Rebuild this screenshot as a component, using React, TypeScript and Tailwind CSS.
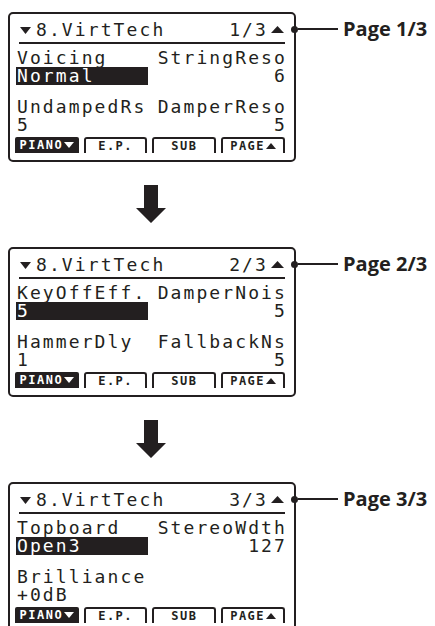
import React from "react";

type Row = { l: string; r: string; v1: string; v2: string; hl?: boolean };

function Down({ w = 11, h = 7, color = "#231f20" }: { w?: number; h?: number; color?: string }) {
  return (
    <svg width={w} height={h} viewBox={`0 0 ${w} ${h}`} className="shrink-0">
      <path d={`M0 0H${w}L${w / 2} ${h}Z`} fill={color} />
    </svg>
  );
}

function Up({ w = 13, h = 7, color = "#231f20" }: { w?: number; h?: number; color?: string }) {
  return (
    <svg width={w} height={h} viewBox={`0 0 ${w} ${h}`} className="shrink-0">
      <path d={`M0 ${h}H${w}L${w / 2} 0Z`} fill={color} />
    </svg>
  );
}

function Panel({ page, rows }: { page: string; rows: Row[] }) {
  return (
    <div className="ml-[8px] w-[288px] h-[150px] shrink-0 border-2 border-[#231f20] rounded-[5px] bg-white pl-[7px] pr-[9px] pt-[7px] pb-[6px] text-[#231f20] font-['DejaVu_Sans_Mono',monospace] text-[18px] tracking-[2.1px]">
      <div className="flex items-center h-[18px] leading-[18px]">
        <div className="ml-[3px] mt-[1px]">
          <Down />
        </div>
        <span className="ml-[5px]">8.VirtTech</span>
        <span className="ml-auto">{page}</span>
        <div className="ml-[3px] mr-[1px] mt-[-1px]">
          <Up />
        </div>
      </div>
      <div className="mt-[3px] ml-[2px] h-[2px] bg-[#231f20]" />
      {rows.map((row, i) => (
        <div key={i} className={i === 0 ? "mt-[5px]" : "mt-[13px]"}>
          <div className="flex justify-between h-[18px] leading-[18px]">
            <span>{row.l}</span>
            <span className="-mr-[2px]">{row.r}</span>
          </div>
          <div className="flex justify-between h-[18px] leading-[18px]">
            <span
              className={
                row.hl
                  ? "bg-[#231f20] text-white w-[132px] -ml-[1px] pl-[1px] h-[18px]"
                  : ""
              }
            >
              {row.v1}
            </span>
            <span className="-mr-[2px]">{row.v2}</span>
          </div>
        </div>
      ))}
      <div className="mt-[3px] -ml-[2px] flex gap-[5px] h-[16px] font-['DejaVu_Sans_Mono',monospace] font-bold text-[12px] tracking-[1.5px] leading-none">
        <div className="w-[64px] bg-[#231f20] rounded-t-[2px] text-white flex items-center justify-center gap-[1px]">
          <span>PIANO</span>
          <Down w={10} h={6} color="#ffffff" />
        </div>
        <div className="w-[64px] border-2 border-b-0 border-[#231f20] rounded-t-[3px] flex items-center justify-center">
          <span>E.P.</span>
        </div>
        <div className="w-[64px] border-2 border-b-0 border-[#231f20] rounded-t-[3px] flex items-center justify-center">
          <span>SUB</span>
        </div>
        <div className="w-[64px] border-2 border-b-0 border-[#231f20] rounded-t-[3px] flex items-center justify-center gap-[1px]">
          <span>PAGE</span>
          <Up w={10} h={6} />
        </div>
      </div>
    </div>
  );
}

function Block({ page, rows }: { page: string; rows: Row[] }) {
  return (
    <div className="flex items-start">
      <Panel page={page} rows={rows} />
      <div className="flex items-center mt-[7px] h-[20px]">
        <div className="w-[7px] h-[7px] rounded-full bg-[#231f20] -ml-[5px] shrink-0" />
        <div className="w-[40px] h-[1.5px] bg-[#231f20] shrink-0" />
        <span className="ml-[5px] whitespace-nowrap font-['Open_Sans',sans-serif] font-bold text-[20px] leading-[20px] text-[#231f20]">
          Page {page}
        </span>
      </div>
    </div>
  );
}

function Arrow() {
  return (
    <div className="ml-[136px] mt-[23px] mb-[24px] h-[38px] w-[30px]">
      <svg width="30" height="38" viewBox="0 0 30 38">
        <path d="M8 0H22V23H30L15 38L0 23H8Z" fill="#231f20" />
      </svg>
    </div>
  );
}

export default function App() {
  return (
    <div className="w-[435px] h-[626px] overflow-hidden bg-white pt-[12px]">
      <Block
        page="1/3"
        rows={[
          { l: "Voicing", r: "StringReso", v1: "Normal", v2: "6", hl: true },
          { l: "UndampedRs", r: "DamperReso", v1: "5", v2: "5" },
        ]}
      />
      <Arrow />
      <Block
        page="2/3"
        rows={[
          { l: "KeyOffEff.", r: "DamperNois", v1: "5", v2: "5", hl: true },
          { l: "HammerDly", r: "FallbackNs", v1: "1", v2: "5" },
        ]}
      />
      <Arrow />
      <Block
        page="3/3"
        rows={[
          { l: "Topboard", r: "StereoWdth", v1: "Open3", v2: "127", hl: true },
          { l: "Brilliance", r: "", v1: "+0dB", v2: "" },
        ]}
      />
    </div>
  );
}
